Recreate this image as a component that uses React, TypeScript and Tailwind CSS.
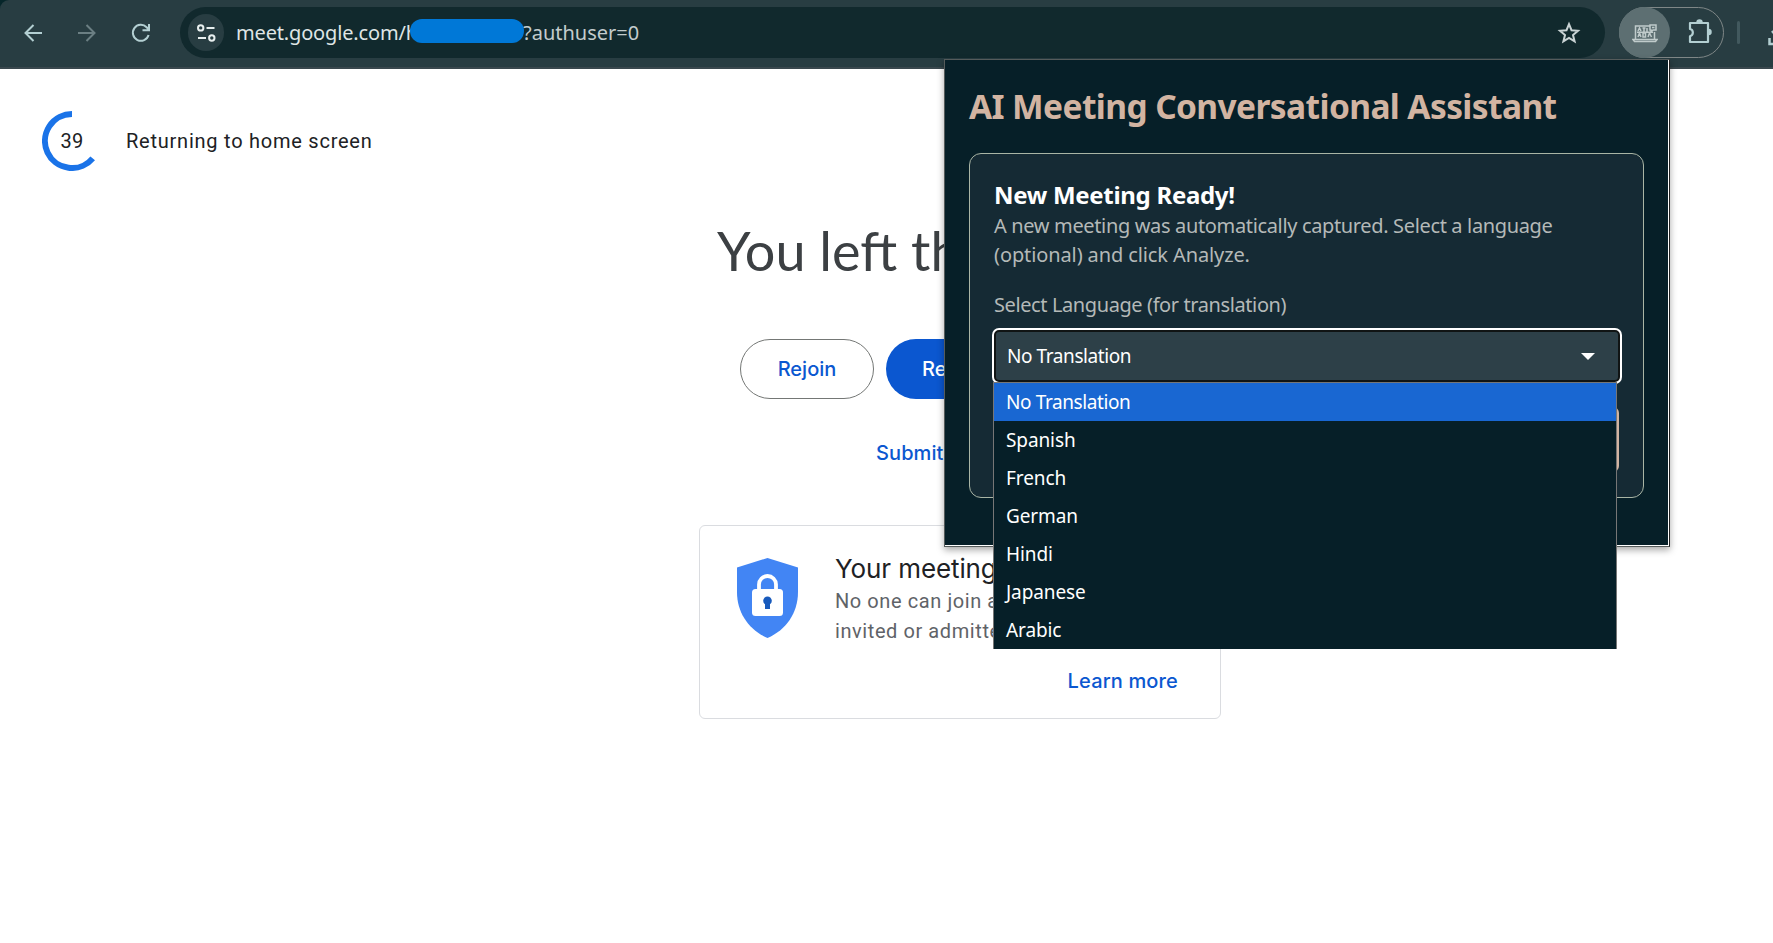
import type { ReactNode } from "react";

const languages = ["Spanish", "French", "German", "Hindi", "Japanese", "Arabic"];

function ToolIcon({ children, className }: { children: ReactNode; className: string }) {
  return (
    <svg viewBox="0 0 20 20" fill="none" stroke="currentColor" strokeWidth="2" className={className}>
      {children}
    </svg>
  );
}

function Toolbar() {
  return (
    <div className="bg-[#06262a]">
      <header className="flex h-[69px] items-start overflow-hidden rounded-tl-[9px] border-b-2 border-[#3a484e] bg-[#283d42] pt-[7px] text-[#b3cfd2]">
        <div className="flex h-[51px] w-[180px] shrink-0 items-center pl-[23px]">
          <ToolIcon className="size-5">
            <path d="M19 10H3M10.5 2 2.5 10l8 8" />
          </ToolIcon>
          <ToolIcon className="ml-[34px] size-5 text-[#6b7f83]">
            <path d="M1 10h16M9.5 2l8 8-8 8" />
          </ToolIcon>
          <ToolIcon className="ml-[34px] size-5">
            <path d="M17.6 12A8 8 0 1 1 15.600 4.200L18 6.700M18 1V7.300H11.500" />
          </ToolIcon>
        </div>
        <div className="flex h-[51px] w-[1425px] shrink-0 items-center rounded-full bg-[#11292d] pl-2 font-['Noto_Sans',sans-serif] text-[20px] text-[#dfe5e5]">
          <div className="flex h-[37px] w-[36px] items-center justify-center rounded-full bg-[#283d42]">
            <svg viewBox="0 0 20 20" className="size-5" fill="none" stroke="#e8efef" strokeWidth="2">
              <circle cx="4.7" cy="4.9" r="2.7" />
              <path d="M10.5 4.9h8M2 15h8" />
              <circle cx="15.8" cy="15" r="2.7" />
            </svg>
          </div>
          <div className="ml-3 flex h-[28px] items-center leading-[28px]">
            <span className="w-[187px] tracking-[-0.16px]">meet.google.com/h</span>
            <span className="relative -ml-[13px] -mt-[4px] h-[24px] w-[114px] rounded-full bg-[#0078d7]" />
            <span className="-ml-px text-[#c3cccd]">?authuser=0</span>
          </div>
          <svg viewBox="0 0 24 24" className="ml-auto mr-[24px] size-6" fill="none" stroke="#c9d3d4" strokeWidth="2">
            <path d="M12 3.2l2.5 6 6.5.5-5 4.3 1.6 6.4L12 17l-5.6 3.4L8 14 3 9.700l6.500-.5z" />
          </svg>
        </div>
        <div className="ml-[14px] flex h-[51px] w-[105px] shrink-0 items-center rounded-full border border-[#7f8787]">
          <div className="-ml-px flex size-[51px] items-center justify-center rounded-full bg-[#5d6f72]">
            <svg viewBox="0 0 26 20" className="h-5 w-[26px]" fill="none" stroke="#c0cbcb" strokeWidth="1.5">
              <path d="M3.500 16V3H18M22.500 9v7M1 16.500h24l-1.500 2h-21z" />
              <path d="M18 2h6v5h-3l-2 2V7h-1zM20 4.500h2.500" />
              <path d="M6 8l1.500-3L9 8M10.500 5h3M12 5v3.500M15 5v3.500M6 14l1.500-4L9 14M11 10v4h2.500v-4zM16 14l1.500-4 2 4M5 9.300h16" />
            </svg>
          </div>
          <svg viewBox="0 0 26 26" className="ml-[17px] mt-[-3px] size-[26px]" fill="none" stroke="#b3cfd2" strokeWidth="2.200" strokeLinejoin="round">
            <path d="M3 5h18v19H3v-5.800a3.700 3.700 0 0 0 0-7.200z" />
            <path d="M10 4.500a2.500 2.500 0 0 1 5 0zM21.500 11.500a2.500 2.500 0 0 1 0 5z" fill="#b3cfd2" strokeWidth="1.500" />
          </svg>
        </div>
        <div className="ml-[13px] mt-[14px] h-[23px] w-[3px] shrink-0 rounded-full bg-[#42595e]" />
        <svg viewBox="0 0 20 20" className="ml-[28px] mt-[20px] size-5 shrink-0" fill="none" stroke="#b3cfd2" strokeWidth="2.500">
          <path d="M1.500 11v6h17v-6M10 0v12M4 4l6 7 6-7" />
        </svg>
      </header>
    </div>
  );
}

function CallEnded() {
  return (
    <main className="w-[1919px] text-[#202124]">
      <div className="flex h-[60px] items-center pl-[42px] font-['Roboto',sans-serif] text-[20px] leading-7">
        <div className="relative flex size-[60px] items-center justify-center">
          <svg viewBox="0 0 60 60" className="absolute inset-0" fill="none" stroke="#1a73e8" strokeWidth="6">
            <path d="M30 3A27 27 0 1 0 50.700 47.300" />
          </svg>
          <span className="tracking-[0.3px]">39</span>
        </div>
        <span className="ml-[24px] tracking-[0.76px]">Returning to home screen</span>
      </div>

      <h1 className="mt-[48px] pl-[717px] font-['Lato',sans-serif] text-[54px] leading-[64px] text-[#3c4043]">
        You left th
      </h1>

      <div className="mt-[56px] flex pl-[740px] font-['Inter',sans-serif] text-[20px] font-medium">
        <button className="h-[60px] w-[134px] rounded-full border border-[#747775] text-[#0b57d0]">Rejoin</button>
        <button className="ml-3 h-[60px] w-[280px] rounded-full bg-[#0b57d0] px-9 text-left text-white">Re</button>
      </div>

      <p className="mt-[40px] pl-[876px] font-['Inter',sans-serif] text-[20px] font-medium leading-[28px] tracking-[0.1px] text-[#0b57d0]">
        Submit
      </p>

      <section className="ml-[699px] mt-[58px] h-[194px] w-[522px] rounded-[6px] border border-[#dadce0] pl-[37px] pr-[42px] pt-[28px]">
        <div className="flex">
          <svg viewBox="0 0 61 80" className="mt-[4px] h-[80px] w-[61px] shrink-0">
            <path d="M30.500 0 61 9.500V34C61 55 49 72 30.500 80 12 72 0 55 0 34V9.500z" fill="#4285f4" />
            <path d="M22 32v-5.500a8.500 8.500 0 0 1 17 0V32" fill="none" stroke="#fff" strokeWidth="3.800" />
            <rect x="15" y="31" width="31" height="27" rx="3.500" fill="#fff" />
            <path d="M28 43h5v8h-5z" fill="#185abc" />
            <circle cx="30.500" cy="42.800" r="4.300" fill="#185abc" />
          </svg>
          <div className="ml-[37px] whitespace-nowrap">
            <h2 className="font-['Inter',sans-serif] text-[26px] leading-[30px] tracking-[-0.1px]">Your meeting</h2>
            <p className="mt-[2px] font-['Roboto',sans-serif] text-[20px] leading-[30px] tracking-[0.58px] text-[#5f6368]">
              No one can join a
              <br />
              invited or admitte
            </p>
          </div>
        </div>
        <p className="mt-[21px] text-right font-['Inter',sans-serif] text-[20px] font-medium leading-[28px] tracking-[0.15px] text-[#0b57d0]">
          Learn more
        </p>
      </section>
    </main>
  );
}

function LanguageSelect() {
  return (
    <div className="relative -ml-[2px] mt-[9px] h-[56px] w-[630px] rounded-[7px] bg-white p-[2px]">
      <div className="flex h-full items-center justify-between rounded-[5px] border-2 border-[#101414] bg-[#2d4048] pl-[11px] pr-[23px] text-[19px] tracking-[-0.42px] text-white">
        <span>No Translation</span>
        <svg viewBox="0 0 14 7" className="h-[7px] w-[14px]">
          <path d="M0 0h14L7 7z" fill="#fff" />
        </svg>
      </div>
      <ul className="absolute left-[1px] top-[54px] w-[624px] border border-b-0 border-[#767676] bg-[#061f28] text-[19px] leading-[38px] tracking-[-0.1px] text-white">
        <li className="bg-[#1967d2] pl-[12px] tracking-[-0.4px]">No Translation</li>
        {languages.map((name) => (
          <li key={name} className="pl-[12px]">
            {name}
          </li>
        ))}
      </ul>
    </div>
  );
}

function ExtensionPopup() {
  return (
    <aside className="absolute left-[944px] top-[59px] h-[488px] w-[726px] border border-[#555b5b] border-r-[#202020] bg-white pb-px pr-px font-['Noto_Sans',sans-serif] shadow-[0_3px_7px_rgba(0,0,0,0.35)]">
      <div className="h-full bg-[#061f28] px-[24px] pt-[26px]">
        <h1 className="whitespace-nowrap text-[33.5px] font-bold leading-[40px] tracking-[-0.6px] text-[#d2b4a2]">
          AI Meeting Conversational Assistant
        </h1>
        <section className="mt-[27px] h-[345px] w-[675px] rounded-[12px] border border-[#a9b5a5] bg-[#152a34] pl-[24px] pt-[26px]">
          <h2 className="text-[24px] font-bold leading-[30px] tracking-[-0.3px] text-white">New Meeting Ready!</h2>
          <p className="mt-px whitespace-nowrap text-[20px] leading-[29px] tracking-[-0.35px] text-[#b4b9b8]">
            A new meeting was automatically captured. Select a language
            <br />
            <span className="tracking-[-0.11px]">(optional) and click Analyze.</span>
          </p>
          <p className="mt-[22px] text-[20px] leading-[28px] tracking-[-0.4px] text-[#b4b9b8]">
            Select Language (for translation)
          </p>
          <LanguageSelect />
          <div className="mt-[23px] h-[65px] w-[625px] rounded-[6px] bg-[#d2b4a2]" />
        </section>
      </div>
    </aside>
  );
}

export default function App() {
  return (
    <div className="relative h-[943px] w-[1773px] overflow-hidden bg-white">
      <Toolbar />
      <div className="pt-[42px]">
        <CallEnded />
      </div>
      <ExtensionPopup />
    </div>
  );
}
